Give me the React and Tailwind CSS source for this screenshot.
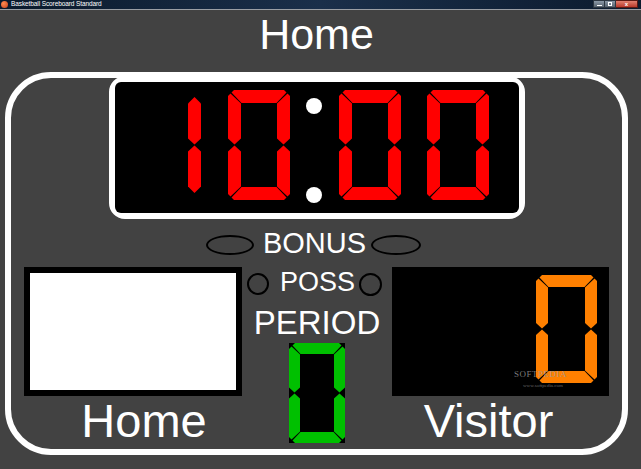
import React from 'react'

// 7-segment polygons for a digit box w x h, stroke t, corner chamfer c, gap g
function segments(w, h, t, c, g) {
    const m = h / 2
    const ht = t / 2
    return {
        a: [[c, 0], [w - c, 0], [w - c / 2 - g, c / 2 - g], [w - t - g, t], [t + g, t], [c / 2 + g, c / 2 - g]],
        b: [[w, c], [w - c / 2 + g, c / 2 + g], [w - t, t + g], [w - t, m - ht], [w - ht, m - g], [w, m - ht]],
        c: [[w, m + ht], [w - ht, m + g], [w - t, m + ht], [w - t, h - t - g], [w - c / 2 + g, h - c / 2 - g], [w, h - c]],
        d: [[t + g, h - t], [w - t - g, h - t], [w - c / 2 - g, h - c / 2 + g], [w - c, h], [c, h], [c / 2 + g, h - c / 2 + g]],
        e: [[0, m + ht], [ht, m + g], [t, m + ht], [t, h - t - g], [c / 2 - g, h - c / 2 - g], [0, h - c]],
        f: [[0, c], [c / 2 - g, c / 2 + g], [t, t + g], [t, m - ht], [ht, m - g], [0, m - ht]],
        g: [[ht + 1, m], [t + 1, m - ht], [w - t - 1, m - ht], [w - ht - 1, m], [w - t - 1, m + ht], [t + 1, m + ht]],
    }
}

const DIGITS = {
    0: 'abcdef', 1: 'bc', 2: 'abdeg', 3: 'abcdg', 4: 'bcfg',
    5: 'acdfg', 6: 'acdefg', 7: 'abc', 8: 'abcdefg', 9: 'abcdfg',
}

function SegDigit({ value, w, h, t, color, c = 6 }) {
    const g = 0.5
    const s = segments(w, h, t, c, g)
    let polys
    if (value === 1) {
        // the "1" is drawn with pointed segments, a bit shorter
        const m = h / 2, ht = t / 2, i = 7
        polys = [
            [[w - ht, i], [w, i + ht], [w, m - ht], [w - ht, m - g], [w - t, m - ht], [w - t, i + ht]],
            [[w - ht, m + g], [w, m + ht], [w, h - i - ht], [w - ht, h - i], [w - t, h - i - ht], [w - t, m + ht]],
        ]
    } else {
        polys = DIGITS[value].split('').map(k => s[k])
    }
    return (
        <svg width={w} height={h} viewBox={`0 0 ${w} ${h}`} className="block shrink-0">
            {polys.map((p, i) => (
                <polygon key={i} points={p.map(q => q.join(',')).join(' ')} fill={color} />
            ))}
        </svg>
    )
}

function Colon() {
    return (
        <svg width="16" height="114" viewBox="0 0 16 114" className="block shrink-0">
            <circle cx="8" cy="16" r="8" fill="#fff" />
            <circle cx="8" cy="105" r="8" fill="#fff" />
        </svg>
    )
}

function TitleBar() {
    return (
        <div className="h-[10px] shrink-0 border-b border-[#9a9ea4] bg-gradient-to-r from-[#0b1a2c] via-[#1a2f4a] to-[#0c1b2e] flex items-center">
            <div className="ml-[1px] w-[7px] h-[7px] rounded-full bg-[radial-gradient(circle_at_35%_35%,#ff8a50,#c8401a)]"></div>
            <span className="ml-[3px] text-[6.5px] leading-none text-white tracking-[-0.1px]">Basketball Scoreboard Standard</span>
            <div className="ml-auto mr-[3px] flex h-[8px] self-start">
                <div className="w-[12px] bg-gradient-to-b from-[#8c9aa8] to-[#56626e] border border-[#2b3540] flex items-end justify-center pb-[1px]">
                    <div className="w-[5px] h-[1px] bg-white"></div>
                </div>
                <div className="w-[11px] bg-gradient-to-b from-[#8c9aa8] to-[#56626e] border border-l-0 border-[#2b3540] flex items-center justify-center">
                    <div className="w-[4px] h-[4px] border border-white"></div>
                </div>
                <div className="w-[22px] bg-gradient-to-b from-[#e08070] to-[#b8382a] border border-l-0 border-[#5a1a14] flex items-center justify-center text-white text-[6px] leading-none font-bold">
                    x
                </div>
            </div>
        </div>
    )
}

export default function App() {
    return (
        <div className="w-[641px] h-[469px] bg-[#424242] overflow-hidden flex flex-col font-['Liberation_Sans',Arial,sans-serif] text-white">
            <TitleBar />

            <div className="ml-[5px] w-[623px] h-[62px] shrink-0 pt-[3px] text-center text-[43px] leading-none">Home</div>

            {/* outer rounded frame */}
            <div className="ml-[5px] w-[623px] h-[383px] border-[6px] border-white rounded-[46px] flex flex-col">
                {/* game clock */}
                <div className="-mt-[2px] mx-auto w-[416px] h-[143px] border-[6px] border-white rounded-[16px]">
                    <div className="w-full h-full bg-black rounded-[6px] flex items-start pt-[8px] pl-[24px]">
                        <SegDigit value={1} w={62} h={110} t={13} color="#ff0000" />
                        <div className="w-[27px]"></div>
                        <SegDigit value={0} w={62} h={110} t={13} color="#ff0000" />
                        <div className="w-[16px]"></div>
                        <Colon />
                        <div className="w-[17px]"></div>
                        <SegDigit value={0} w={62} h={110} t={13} color="#ff0000" />
                        <div className="w-[26px]"></div>
                        <SegDigit value={0} w={62} h={110} t={13} color="#ff0000" />
                    </div>
                </div>

                {/* bonus */}
                <div className="mt-[10px] h-[29px] pr-[6px] flex items-center justify-center">
                    <div className="w-[48px] h-[20px] rounded-[50%] border-[2.5px] border-black mt-[3px]"></div>
                    <span className="ml-[9px] mr-[5px] text-[29px] leading-none">BONUS</span>
                    <div className="w-[50px] h-[20px] rounded-[50%] border-[2.5px] border-black mt-[3px]"></div>
                </div>

                <div className="mt-[9px] px-[13px] flex justify-between">
                    {/* home */}
                    <div className="w-[218px] flex flex-col">
                        <div className="h-[129px] bg-white border-[6px] border-black"></div>
                        <div className="mt-[1px] pl-[22px] text-center text-[47px] leading-none">Home</div>
                    </div>

                    {/* center */}
                    <div className="flex-1 flex flex-col items-center">
                        <div className="mt-[2px] h-[27px] pr-[5px] flex items-center">
                            <div className="w-[22px] h-[22px] rounded-full border-[2.5px] border-black mt-[3px]"></div>
                            <span className="ml-[11px] mr-[4px] text-[27px] leading-none">POSS</span>
                            <div className="w-[23px] h-[23px] rounded-full border-[2.5px] border-black mt-[3px]"></div>
                        </div>
                        <div className="mt-[10px] text-[33px] leading-none">PERIOD</div>
                        <div className="mt-[4px] bg-black w-[56px] h-[100px]">
                            <SegDigit value={0} w={56} h={100} t={11} color="#00c000" />
                        </div>
                    </div>

                    {/* visitor */}
                    <div className="w-[217px] flex flex-col">
                        <div className="relative h-[129px] bg-black flex justify-end items-start pt-[8px] pr-[12px]">
                            <SegDigit value={0} w={61} h={108} t={12} color="#ff8000" />
                            <div className="absolute left-[122px] top-[103px] text-[9px] leading-none tracking-[0.5px] text-[#9a9a9a]/80 font-['Liberation_Serif',serif]">SOFTPEDIA</div>
                            <div className="absolute left-[131px] top-[116px] text-[5px] leading-none text-[#9a9a9a]/70 font-['Liberation_Serif',serif]">www.softpedia.com</div>
                        </div>
                        <div className="mt-[1px] pr-[24px] text-center text-[47px] leading-none">Visitor</div>
                    </div>
                </div>
            </div>
        </div>
    )
}
